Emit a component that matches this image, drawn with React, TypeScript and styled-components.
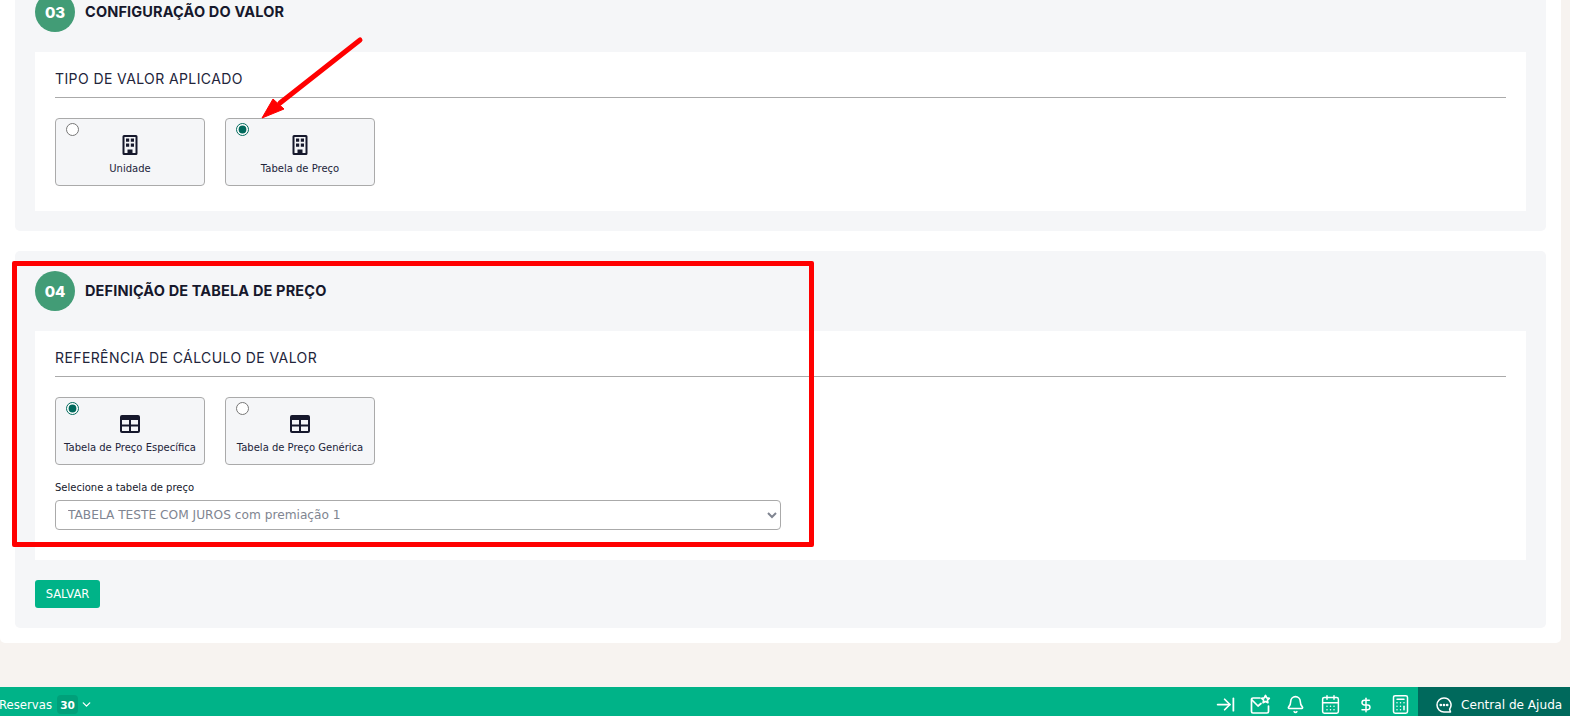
import { createGlobalStyle, styled } from "styled-components"
import { ArrowRightToLine, Bell, Calculator, CalendarDays, ChevronDown, DollarSign } from "lucide-react"

const bodyFont = `"DejaVu Sans", Verdana, sans-serif`
const titleFont = `Inter, "Liberation Sans", sans-serif`

const GlobalStyle = createGlobalStyle`
    html, body {
        margin: 0;
        height: 100%;
        overflow: hidden;
        background: #f7f3f0;
    }
    * {
        box-sizing: border-box;
    }
`

const Screen = styled.div`
    position: relative;
    display: flex;
    flex-direction: column;
    height: 716px;
    overflow: hidden;
`

const Content = styled.main`
    flex: 1;
    min-height: 0;
    overflow: hidden;
`

const WhiteSheet = styled.div`
    display: flex;
    flex-direction: column;
    gap: 20px;
    width: 1561px;
    margin-top: -28px;
    padding: 0 15px 15px;
    background: #fff;
    border-radius: 0 0 5px 5px;
`

const Section = styled.section`
    display: flex;
    flex-direction: column;
    gap: 20px;
    padding: 20px;
    background: #f5f6f8;
    border-radius: 5px;
`

const SectionHeader = styled.header`
    display: flex;
    align-items: center;
    gap: 10px;
`

const StepNumber = styled.span`
    display: flex;
    align-items: center;
    justify-content: center;
    width: 40px;
    height: 40px;
    border-radius: 50%;
    background: #429c76;
    color: #fff;
    font-family: ${titleFont};
    font-size: 15px;
    font-weight: 800;
`

const SectionTitle = styled.h2`
    margin: 0;
    padding-bottom: 2px;
    color: #16182c;
    font-family: ${titleFont};
    font-size: 14.5px;
    font-weight: 700;
    letter-spacing: 0.15px;
`

const Panel = styled.div<{ $bottom: number }>`
    display: flex;
    flex-direction: column;
    padding: 17px 20px ${(p) => p.$bottom}px;
    background: #fff;
`

const PanelTitle = styled.h3`
    margin: 0;
    padding-bottom: 9px;
    border-bottom: 1px solid #aaa;
    color: #22243a;
    font-family: ${titleFont};
    font-size: 14px;
    font-weight: 400;
    letter-spacing: 0.4px;
    line-height: 19px;
`

const Options = styled.div`
    display: flex;
    gap: 20px;
    margin-top: 20px;
`

const OptionCard = styled.label`
    position: relative;
    display: flex;
    flex-direction: column;
    align-items: center;
    width: 150px;
    height: 68px;
    padding-top: 15px;
    border: 1px solid #aaa;
    border-radius: 4px;
    background: #f5f6f8;
    color: #22243a;
    font-family: ${bodyFont};
    font-size: 10px;
`

const OptionRadio = styled.input`
    position: absolute;
    top: 4px;
    left: 10px;
    margin: 0;
    accent-color: #00695c;
`

const OptionIcon = styled.svg`
    display: block;
    height: 22px;
    width: 22px;
    color: #16182c;
`

const OptionLabel = styled.span`
    margin-top: 6px;
    line-height: 14px;
    white-space: nowrap;
`

const FieldLabel = styled.label`
    display: block;
    margin-top: 16px;
    margin-bottom: 5px;
    color: #16182c;
    font-family: ${bodyFont};
    font-size: 10px;
    line-height: 14px;
`

const TableSelect = styled.select`
    display: block;
    width: 726px;
    height: 30px;
    padding: 0 8px;
    border: 1px solid #aaa;
    border-radius: 4px;
    background: #fff;
    color: #808591;
    font-family: ${bodyFont};
    font-size: 12.2px;
`

const SaveButton = styled.button`
    align-self: flex-start;
    width: 65px;
    height: 28px;
    padding: 0;
    border: 0;
    border-radius: 3px;
    background: #00b388;
    color: #fff;
    font-family: ${bodyFont};
    font-size: 11.5px;
`

const BottomBar = styled.footer`
    display: flex;
    align-items: stretch;
    justify-content: space-between;
    height: 29px;
    background: #00b388;
    color: #fff;
    font-family: ${bodyFont};
`

const ReservasGroup = styled.div`
    display: flex;
    align-items: center;
    margin-left: -1px;
    padding-top: 6px;
    font-size: 11.7px;
`

const CountBadge = styled.span`
    display: flex;
    align-items: center;
    justify-content: center;
    width: 21px;
    height: 19px;
    margin: 0 2px 0 5px;
    border-radius: 4px;
    background: #00a07a;
    font-size: 10.5px;
    font-weight: 600;
`

const BarTools = styled.div`
    display: flex;
    align-items: stretch;
`

const ToolIcons = styled.div`
    display: flex;
    align-items: center;
    padding-top: 6px;
`

const ToolSlot = styled.span`
    display: flex;
    align-items: center;
    justify-content: center;
    width: 35px;
`

const HelpLink = styled.div`
    display: flex;
    align-items: center;
    gap: 8px;
    width: 152px;
    padding: 6px 0 0 17px;
    background: #00695c;
    font-size: 12.1px;
    white-space: nowrap;
`

const RedFrame = styled.div`
    position: absolute;
    top: 261px;
    left: 12px;
    width: 802px;
    height: 286px;
    border: 5px solid #ff0000;
    border-radius: 2px;
    pointer-events: none;
`

const RedArrow = styled.svg`
    position: absolute;
    top: 30px;
    left: 255px;
    pointer-events: none;
`

function BuildingIcon() {
    return (
        <OptionIcon viewBox="0 0 22 22">
            <path fill="currentColor" fillRule="evenodd" d="M5 1h12a1.500 1.500 0 0 1 1.500 1.500v17A1.500 1.500 0 0 1 17 21H5a1.500 1.500 0 0 1-1.500-1.500v-17A1.500 1.500 0 0 1 5 1Zm.5 2v16H8.500v-3.500h5V19h3V3h-11Zm1.500 1.500h3.200v3.200H7V4.500Zm4.800 0H15v3.200h-3.200V4.500ZM7 9.500h3.200v3.200H7V9.500Zm4.800 0H15v3.200h-3.200V9.500Z" />
        </OptionIcon>
    )
}

function TableIcon() {
    return (
        <OptionIcon viewBox="0 0 22 22">
            <path fill="currentColor" fillRule="evenodd" d="M3 2h16a2 2 0 0 1 2 2v14a2 2 0 0 1-2 2H3a2 2 0 0 1-2-2V4a2 2 0 0 1 2-2Zm0 5v4.500h7V7H3Zm9 0v4.500h7V7h-7Zm-9 6.500V18h7v-4.500H3Zm9 0V18h7v-4.500h-7Z" />
        </OptionIcon>
    )
}

function MailStarIcon() {
    return (
        <svg width="21" height="21" viewBox="0 0 21 21" fill="none" stroke="currentColor" strokeWidth="1.700" strokeLinecap="round" strokeLinejoin="round">
            <path d="M10 4H3a1.500 1.500 0 0 0-1.500 1.500v12A1.500 1.500 0 0 0 3 19h14a1.500 1.500 0 0 0 1.500-1.500V12" />
            <path d="m2 6 6 6 3-2.500" />
            <path d="m15.500 1.500 1.200 2.400 2.600.4-1.900 1.800.5 2.600-2.400-1.200-2.400 1.200.5-2.600-1.900-1.800 2.600-.4 1.200-2.400Z" />
        </svg>
    )
}

function ChatIcon() {
    return (
        <svg width="18" height="18" viewBox="0 0 18 18" fill="none" stroke="currentColor" strokeWidth="1.500" strokeLinecap="round" strokeLinejoin="round">
            <path d="M9 2a7 7 0 1 0 0 14h6.500l-.9-2.800A7 7 0 0 0 9 2Z" />
            <circle cx="5.800" cy="9" r=".6" fill="currentColor" />
            <circle cx="9" cy="9" r=".6" fill="currentColor" />
            <circle cx="12.200" cy="9" r=".6" fill="currentColor" />
        </svg>
    )
}

function App() {
    return (
        <Screen>
            <GlobalStyle />
            <Content>
                <WhiteSheet>
                    <Section>
                        <SectionHeader>
                            <StepNumber>03</StepNumber>
                            <SectionTitle>CONFIGURAÇÃO DO VALOR</SectionTitle>
                        </SectionHeader>
                        <Panel $bottom={25}>
                            <PanelTitle>TIPO DE VALOR APLICADO</PanelTitle>
                            <Options>
                                <OptionCard>
                                    <OptionRadio type="radio" name="tipo" />
                                    <BuildingIcon />
                                    <OptionLabel>Unidade</OptionLabel>
                                </OptionCard>
                                <OptionCard>
                                    <OptionRadio type="radio" name="tipo" defaultChecked />
                                    <BuildingIcon />
                                    <OptionLabel>Tabela de Preço</OptionLabel>
                                </OptionCard>
                            </Options>
                        </Panel>
                    </Section>
                    <Section>
                        <SectionHeader>
                            <StepNumber>04</StepNumber>
                            <SectionTitle>DEFINIÇÃO DE TABELA DE PREÇO</SectionTitle>
                        </SectionHeader>
                        <Panel $bottom={30}>
                            <PanelTitle>REFERÊNCIA DE CÁLCULO DE VALOR</PanelTitle>
                            <Options>
                                <OptionCard>
                                    <OptionRadio type="radio" name="referencia" defaultChecked />
                                    <TableIcon />
                                    <OptionLabel>Tabela de Preço Específica</OptionLabel>
                                </OptionCard>
                                <OptionCard>
                                    <OptionRadio type="radio" name="referencia" />
                                    <TableIcon />
                                    <OptionLabel>Tabela de Preço Genérica</OptionLabel>
                                </OptionCard>
                            </Options>
                            <FieldLabel htmlFor="tabela">Selecione a tabela de preço</FieldLabel>
                            <TableSelect id="tabela" defaultValue="1">
                                <option value="1">TABELA TESTE COM JUROS com premiação 1</option>
                            </TableSelect>
                        </Panel>
                        <SaveButton type="button">SALVAR</SaveButton>
                    </Section>
                </WhiteSheet>
            </Content>
            <BottomBar>
                <ReservasGroup>
                    Reservas
                    <CountBadge>30</CountBadge>
                    <ChevronDown size={13} strokeWidth={2.4} />
                </ReservasGroup>
                <BarTools>
                    <ToolIcons>
                        <ToolSlot><ArrowRightToLine size={21} strokeWidth={2} /></ToolSlot>
                        <ToolSlot><MailStarIcon /></ToolSlot>
                        <ToolSlot><Bell size={19} strokeWidth={2} /></ToolSlot>
                        <ToolSlot><CalendarDays size={21} strokeWidth={1.7} /></ToolSlot>
                        <ToolSlot><DollarSign size={16} strokeWidth={2.2} /></ToolSlot>
                        <ToolSlot><Calculator size={21} strokeWidth={1.7} /></ToolSlot>
                    </ToolIcons>
                    <HelpLink>
                        <ChatIcon />
                        Central de Ajuda
                    </HelpLink>
                </BarTools>
            </BottomBar>
            <RedFrame />
            <RedArrow width="115" height="95" viewBox="0 0 115 95">
                <path d="M105 10 25 73" stroke="#ff0000" strokeWidth="5" strokeLinecap="round" />
                <path d="M7 88 18 69 29 79Z" fill="#ff0000" stroke="#ff0000" strokeWidth="1" />
            </RedArrow>
        </Screen>
    )
}

export default App
